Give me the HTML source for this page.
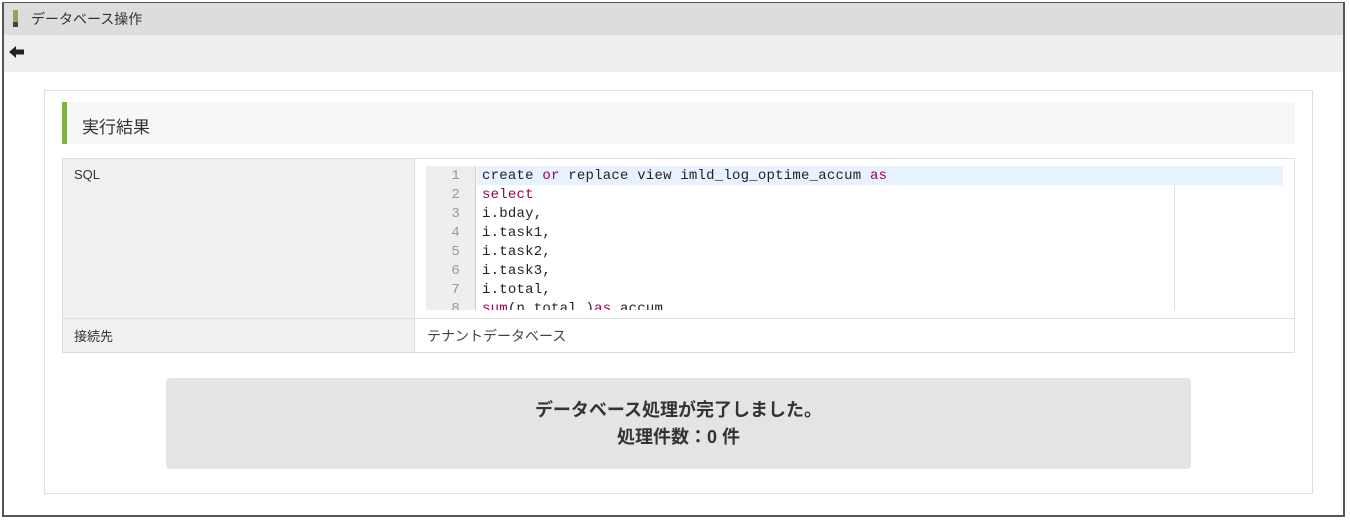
<!DOCTYPE html>
<html><head><meta charset="utf-8"><style>
*{margin:0;padding:0;box-sizing:border-box}
body{width:1350px;height:522px;background:#fff;position:relative;overflow:hidden;font-family:"Liberation Sans","Noto Sans CJK JP",sans-serif;color:#333}
.a{position:absolute}
.frame{left:2px;top:2px;width:1343px;height:515px;border:2px solid #555;border-top-width:1px}
.code{font-family:"Liberation Mono","DejaVu Sans Mono",monospace;font-size:14px;line-height:19px;letter-spacing:0.22px}
.kw{color:#905}
</style></head><body>
<div class="a frame"></div>
<div class="a" style="left:4px;top:3px;width:1339px;height:32px;background:#ddd"></div>
<div class="a" style="left:13px;top:10px;width:5px;height:12px;background:#7cb342"></div>
<div class="a" style="left:13px;top:22px;width:5px;height:5px;background:#444"></div>
<div class="a" style="left:31px;top:9px;font-size:14px;color:#333">データベース操作</div>
<div class="a" style="left:4px;top:35px;width:1339px;height:37px;background:#efefef"></div>
<svg class="a" style="left:9px;top:45px" width="16" height="14" viewBox="0 0 16 14"><path d="M0 7 L7 1 V4.5 H15 V9.5 H7 V13 Z" fill="#222"/></svg>
<div class="a" style="left:44px;top:90px;width:1269px;height:404px;border:1px solid #ddd"></div>
<div class="a" style="left:62px;top:102px;width:1233px;height:42px;background:#f7f7f7;border-left:5px solid #7cb342"></div>
<div class="a" style="left:82px;top:113px;font-size:17px;color:#333">実行結果</div>
<div class="a" style="left:62px;top:158px;width:1233px;height:195px;border:1px solid #ddd"></div>
<div class="a" style="left:63px;top:159px;width:351px;height:193px;background:#f0f0f0"></div>
<div class="a" style="left:414px;top:159px;width:1px;height:193px;background:#ddd"></div>
<div class="a" style="left:63px;top:318px;width:1231px;height:1px;background:#ddd"></div>
<div class="a" style="left:74px;top:167px;font-size:13px">SQL</div>
<div class="a" style="left:74px;top:326px;font-size:13px">接続先</div>
<div class="a" style="left:427px;top:326px;font-size:14px;color:#444">テナントデータベース</div>
<div class="a" style="left:426px;top:166px;width:857px;height:144px;overflow:hidden">
 <div class="a" style="left:0;top:0;width:50px;height:144px;background:#eee;border-right:1px solid #ccc"></div>
 <div class="a" style="left:51px;top:0;width:806px;height:19px;background:#e8f2fe"></div>
 <div class="a" style="left:748px;top:19px;width:1px;height:125px;background:#ddd"></div>
 <div class="a code" style="left:0;top:1px;width:34px;text-align:right;color:#999">1<br>2<br>3<br>4<br>5<br>6<br>7<br>8</div>
 <div class="a code" style="left:56px;top:1px;color:#222;white-space:pre">create <span class="kw">or</span> replace view imld_log_optime_accum <span class="kw">as</span>
<span class="kw">select</span>
i.bday,
i.task1,
i.task2,
i.task3,
i.total,
<span class="kw">sum</span>(n.total )<span class="kw">as</span> accum</div>
</div>
<div class="a" style="left:166px;top:378px;width:1025px;height:91px;background:#e4e4e4;border-radius:4px;text-align:center;font-size:18px;font-weight:bold;line-height:27px;padding-top:19px;color:#333">データベース処理が完了しました。<br>処理件数：0 件</div>
</body></html>
